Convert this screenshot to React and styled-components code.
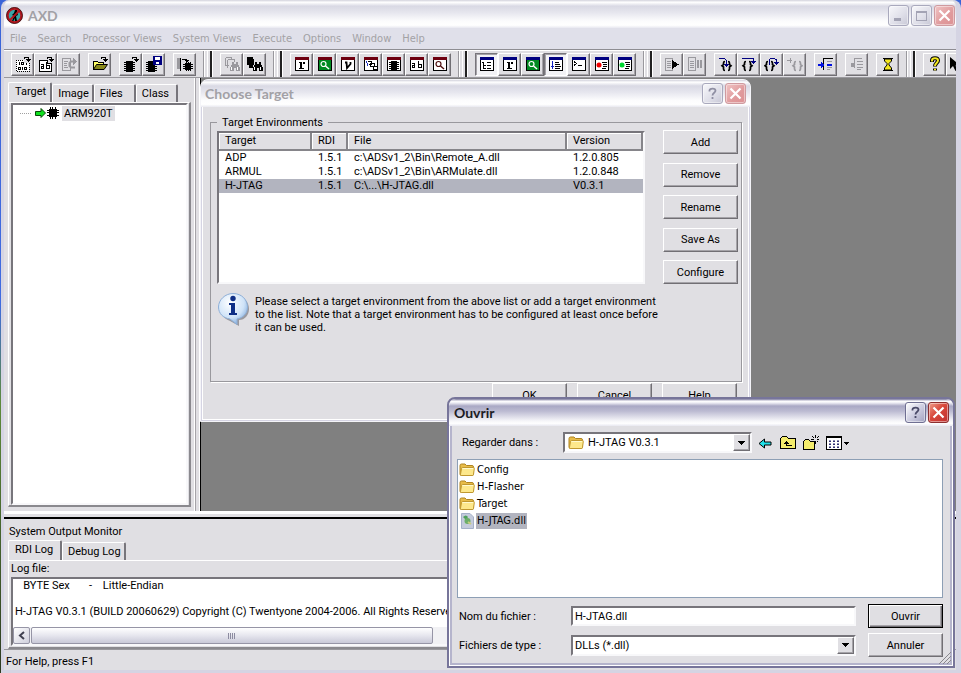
import React from 'react';
import styled, { createGlobalStyle, css } from 'styled-components';

const FACE = '#e0dfe3';
const SANS = 'Roboto, "Liberation Sans", Arial, sans-serif';
const TAHOMA = '"DejaVu Sans Condensed", "Noto Sans", sans-serif';
const TITLE = 'Lato, "Noto Sans", sans-serif';

const GlobalStyle = createGlobalStyle`
  *, *::before, *::after { box-sizing: border-box; }
  body {
    margin: 0;
    background: linear-gradient(#3a64d8 0, #3f6be0 45%, #5d8a3a 60%, #2d3a20 100%);
    font: 11px/13px ${SANS};
    color: #000;
    overflow: hidden;
  }
  button, input, select, textarea { font: inherit; color: inherit; margin: 0; }
  svg { display: block; flex: none; }
`;

const raised = css`
  border: 1px solid;
  border-color: #fff #716f74 #716f74 #fff;
  box-shadow: inset -1px -1px #a5a3a8;
`;
const sunken = css`
  border: 2px solid;
  border-color: #77757b #f8f8fa #f8f8fa #77757b;
`;

/* ---------- main window ---------- */
const Desktop = styled.div`
  position: relative;
  min-height: 100vh;
  padding-left: 1px;
  display: flex;
`;
const AppWindow = styled.main`
  flex: 1;
  min-width: 0;
  display: flex;
  flex-direction: column;
  background: ${FACE};
  border: solid #d5d4e3;
  border-width: 0 5px 3px 3px;
  border-radius: 8px 8px 0 0;
`;
const TitleBar = styled.header`
  display: flex;
  align-items: center;
  gap: 2px;
  height: ${p => p.$h}px;
  flex: none;
  padding: ${p => p.$pad};
  border-radius: 7px 7px 0 0;
  background: ${p => p.$active
    ? 'linear-gradient(#77759a 0, #fff 8%, #eeeef5 14%, #a9a8c4 26%, #bcbbd2 45%, #f4f4f8 80%, #fff 90%, #e8e8f0 100%)'
    : 'linear-gradient(#d2d2dc 0, #fff 8%, #d9d9e4 22%, #e6e6ee 45%, #fcfcfd 75%, #fff 90%, #e8e8f0 100%)'};
`;
const TitleText = styled.h1`
  flex: 1;
  margin: 0;
  font: bold 14px/18px ${TITLE};
  color: ${p => (p.$active ? '#1c1c24' : '#a2a1a6')};
`;
const CaptionButton = styled.button`
  width: 21px;
  height: 21px;
  padding: 0;
  display: grid;
  place-items: center;
  border-radius: 3px;
  border: 1px solid ${p => (p.$close ? (p.$active ? '#8c2f2f' : '#cf9a9f') : (p.$active ? '#6f6f92' : '#a9a9bd'))};
  background: ${p => (p.$close
    ? (p.$active ? 'linear-gradient(135deg, #f0a08c, #d8483c 45%, #c03030)' : 'linear-gradient(135deg, #f0c4c4, #e09a9c 60%, #dd9294)')
    : (p.$active ? 'linear-gradient(135deg, #fff, #cfcfe2 50%, #a2a2c0)' : 'linear-gradient(135deg, #f8f8fb, #dedee8 60%, #c8c8d6)'))};
  box-shadow: inset 0 0 0 1px rgba(255, 255, 255, 0.45);
`;
const MenuBar = styled.nav`
  display: flex;
  gap: 11px;
  height: 21px;
  flex: none;
  padding: 0 6px;
  align-items: center;
  background: #e0e0ea;
`;
const MenuItem = styled.button`
  border: 0;
  padding: 0;
  background: none;
  font: 11px/14px ${TAHOMA};
  color: #a3a2a5;
  white-space: nowrap;
`;

/* ---------- toolbar ---------- */
const Toolbar = styled.div`
  display: flex;
  height: 29px;
  flex: none;
  padding: 1px 0 0 7px;
  align-items: center;
  border-top: 1px solid #8e8d92;
  box-shadow: inset 0 1px #fff;
  border-bottom: 1px solid #99989d;
  overflow: hidden;
`;
const ToolGroup = styled.div`
  display: flex;
  flex: none;
  & + & { margin-left: 8px; }
`;
const ToolButton = styled.button`
  width: 23px;
  height: 23px;
  padding: 0;
  display: grid;
  place-items: center;
  background: ${p => (p.$pressed ? '#f2f2f5' : FACE)};
  ${raised}
  ${p => p.$pressed && css`
    border-color: #77757b #fff #fff #77757b;
    box-shadow: inset 1px 1px #a5a3a8;
  `}
`;
const Divider = styled.div`
  width: 24px;
  align-self: stretch;
  flex: none;
  background: linear-gradient(90deg,
    transparent 7px, #99989d 7px 8px, #fff 8px 9px, transparent 9px 11px, #fff 11px 12px, transparent 12px 14px,
    #222 14px 16px, #fff 16px 17px, transparent 17px);
`;

/* ---------- work area ---------- */
const Work = styled.div`
  display: flex;
  flex: 1;
  min-height: 0;
`;
const SidePane = styled.aside`
  width: 197px;
  flex: none;
  display: flex;
  flex-direction: column;
  padding: 4px 9px 4px 4px;
  border-right: 1px solid #000;
  box-shadow: inset -1px 0 #fff, inset -4px 0 ${FACE}, inset -5px 0 #a5a3a8, inset -6px 0 #fff;
`;
const TabList = styled.div`
  display: flex;
  align-items: flex-end;
  height: 20px;
`;
const Tab = styled.button`
  height: ${p => (p.$on ? 20 : 18)}px;
  padding: ${p => (p.$on ? '0 4px 2px 6px' : '1px 3px 0 5px')};
  min-width: ${p => p.$w || 0}px;
  text-align: left;
  background: ${FACE};
  border: solid;
  border-width: 1px 2px 0 1px;
  border-color: #fff #77757b #fff #fff;
  border-radius: 2px 2px 0 0;
  line-height: 14px;
  white-space: nowrap;
`;
const TabPage = styled.div`
  flex: 1;
  min-height: 0;
  display: flex;
  flex-direction: column;
  padding: ${p => p.$pad};
  border: solid;
  border-width: 1px 2px 2px 1px;
  border-color: #fff #8a898e #8a898e #fff;
`;
const Tree = styled.ul`
  ${sunken}
  flex: 1;
  margin: 0;
  padding: 0 7px;
  list-style: none;
  background: #fff;
`;
const TreeItem = styled.li`
  display: flex;
  align-items: center;
  height: 16px;
`;
const TreeLabel = styled.span`
  margin-left: 3px;
  padding: 1px 2px;
  line-height: 13px;
  background: ${FACE};
`;
const Mdi = styled.section`
  flex: 1;
  background: #808080;
`;
const Splitter = styled.div`
  height: 8px;
  flex: none;
  background: linear-gradient(#fff 3px, ${FACE} 3px 6px, #000 6px 8px);
`;
const Monitor = styled.section`
  flex: none;
  height: 130px;
  display: flex;
  flex-direction: column;
  padding: 5px 5px 0 4px;
`;
const MonitorTitle = styled.h2`
  margin: 0 0 1px 1px;
  font: 11px/15px ${SANS};
`;
const LogLabel = styled.label`
  line-height: 15px;
  margin-bottom: 1px;
`;
const LogBox = styled.div`
  ${sunken}
  flex: 1;
  min-height: 0;
  display: flex;
  flex-direction: column;
  background: #fff;
`;
const LogText = styled.textarea`
  flex: 1;
  min-height: 0;
  border: 0;
  padding: 0 2px;
  resize: none;
  overflow: hidden;
  background: none;
  line-height: 13px;
  white-space: pre;
  outline: none;
`;
const ScrollRow = styled.div`
  display: flex;
  height: 17px;
  flex: none;
  background: #f1f1f4;
`;
const ScrollArrow = styled.button`
  width: 17px;
  padding: 0;
  display: grid;
  place-items: center;
  border: 1px solid #9695a6;
  border-radius: 2px;
  background: linear-gradient(135deg, #fff, #cfcfdc);
`;
const ScrollThumb = styled.div`
  width: 402px;
  margin-left: 1px;
  display: grid;
  place-items: center;
  border: 1px solid #9695a6;
  border-radius: 2px;
  background: linear-gradient(#fff, #e6e6ee 50%, #c9c9d8);
`;
const StatusBar = styled.footer`
  height: 21px;
  flex: none;
  padding: 4px 2px;
  line-height: 15px;
  border-top: 1px solid #99989d;
`;

/* ---------- dialogs ---------- */
const Dialog = styled.section`
  position: absolute;
  left: ${p => p.$x}px;
  top: ${p => p.$y}px;
  width: ${p => p.$w}px;
  display: flex;
  flex-direction: column;
  background: ${FACE};
  border: ${p => (p.$active ? '2px solid #77759a' : '1px solid #f4f4f8')};
  border-radius: 8px 8px 0 0;
  box-shadow: ${p => (p.$active ? 'inset 0 0 0 1px #fff, inset 0 0 0 3px #b5b4cc' : 'inset 0 0 0 1px #d5d4e3, inset 0 0 0 2px #fff')};
`;
const DialogBody = styled.div`
  display: flex;
  flex-direction: column;
  padding: ${p => p.$pad};
`;
const Group = styled.fieldset`
  min-width: 0;
  margin: 0;
  padding: 0 3px 0 6px;
  border: 1px solid #99989d;
  box-shadow: 1px 1px #fff;
  min-height: 267px;
`;
const Legend = styled.legend`
  padding: 0 5px;
  line-height: 15px;
`;
const GroupRow = styled.div`
  display: flex;
  align-items: flex-end;
  gap: 18px;
`;
const ListFrame = styled.div`
  ${sunken}
  flex: 1;
  height: 153px;
  background: #fff;
`;
const Table = styled.table`
  width: 100%;
  border-collapse: separate;
  border-spacing: 0;
  table-layout: fixed;
  line-height: 14px;
`;
const Th = styled.th`
  width: ${p => (p.$w ? `${p.$w}px` : 'auto')};
  height: 18px;
  padding: 0 6px;
  text-align: left;
  font-weight: normal;
  background: ${FACE};
  border: solid;
  border-width: 0 2px 2px 0;
  border-color: #86858a;
  box-shadow: inset 1px 1px #fff;
`;
const Tr = styled.tr`
  background: ${p => (p.$selected ? '#b2b4bf' : 'transparent')};
`;
const Td = styled.td`
  height: 14px;
  padding: 0 5px 0 6px;
  white-space: nowrap;
`;
const ButtonColumn = styled.div`
  width: 75px;
  height: 154px;
  display: flex;
  flex-direction: column;
  justify-content: space-between;
`;
const ButtonRow = styled.div`
  display: flex;
  justify-content: flex-end;
  gap: 10px;
  padding: 1px 5px 0 0;
`;
const PushButton = styled.button`
  width: 75px;
  height: 24px;
  padding: 0;
  background: ${FACE};
  ${raised}
  ${p => p.$default && css`
    border-color: #000;
    box-shadow: inset 1px 1px #fff, inset -1px -1px #716f74, inset -2px -2px #a5a3a8;
  `}
`;
const Info = styled.div`
  display: flex;
  gap: 5px;
  padding: 9px 0 0 1px;
`;
const InfoText = styled.p`
  margin: 2px 0 0;
  white-space: nowrap;
`;
const FieldRow = styled.div`
  display: grid;
  grid-template-columns: 110px 189px 1fr;
  align-items: center;
  min-height: 21px;
`;
const FolderLabel = styled.label`
  padding-left: 9px;
`;
const SelectWrap = styled.div`
  ${sunken}
  position: relative;
  display: flex;
  align-items: center;
  height: 21px;
  padding-left: ${p => (p.$icon ? 3 : 0)}px;
  background: #fff;
`;
const Select = styled.select`
  appearance: none;
  flex: 1;
  min-width: 0;
  height: 17px;
  border: 0;
  padding: 0 18px 0 ${p => (p.$icon ? 4 : 2)}px;
  background: none;
  outline: none;
`;
const DropArrow = styled.span`
  width: 17px;
  height: 17px;
  display: grid;
  place-items: center;
  pointer-events: none;
  background: ${FACE};
  margin-left: -17px;
  ${raised}
`;
const TextInput = styled.input`
  ${sunken}
  width: 100%;
  height: 20px;
  padding: 0 2px;
  background: #fff;
  outline: none;
`;
const NavIcons = styled.div`
  display: flex;
  align-items: center;
  gap: 7px;
  padding-left: 5px;
`;
const IconButton = styled.button`
  border: 0;
  padding: 0;
  background: none;
`;
const FileList = styled.ul`
  margin: 6px 6px 0 4px;
  padding: 1px;
  height: 139px;
  list-style: none;
  background: #fff;
  border: 1px solid #8d9fb5;
`;
const FileItem = styled.li`
  display: flex;
  align-items: center;
  height: 17px;
`;
const FileName = styled.span`
  margin-left: 1px;
  padding: 0 1px;
  font: 11px/16px ${TAHOMA};
  background: ${p => (p.$selected ? '#b2b4bf' : 'none')};
`;
const Form = styled.form`
  display: grid;
  grid-template-columns: 112px 1fr 75px;
  row-gap: 5px;
  align-items: center;
  margin: 6px 6px 0 6px;
`;
const FieldCell = styled.div`
  padding-right: 12px;
`;
const Grip = styled.div`
  position: absolute;
  right: 2px;
  bottom: 2px;
`;

/* ---------- icons ---------- */
const Px = ({ w = 16, h = 16, children, crisp = true }) => (
  <svg width={w} height={h} viewBox={`0 0 ${w} ${h}`} fill="none" shapeRendering={crisp ? 'crispEdges' : 'auto'} aria-hidden="true">
    {children}
  </svg>
);
const G = '#9a999e';
const Hook = ({ c = '#000' }) => <path d="M9.500 2.500V1.500H13.500V4.500M11 3.500H16M12 4.500H15M13 5.500H14" stroke={c} />;
const Frame = ({ head, fill = '#fff', children }) => (
  <Px>
    <rect x="1.500" y="1.500" width="13" height="13" fill={fill} stroke={head} />
    <rect x="1" y="1" width="14" height="3" fill={head} />
    <path d="M14.500 4V14.500H1.500V4" stroke="#000" />
    {children}
  </Px>
);
const Chip = ({ x = 0, y = 0 }) => (
  <g transform={`translate(${x} ${y})`}>
    <rect x="2" y="0" width="7" height="11" fill="#000" />
    <path d="M0 1.500H11M0 3.500H11M0 5.500H11M0 7.500H11M0 9.500H11" stroke="#000" />
  </g>
);
const Bino = ({ x, y, c = '#000' }) => (
  <g transform={`translate(${x} ${y})`}>
    <path d="M2 0H4V2H6V0H8V2L10 6V9H6V6H4V9H0V6L2 2Z" fill={c} />
    <path d="M1.500 5V8M7.500 5V8" stroke="#fff" />
  </g>
);
const Braces = ({ x = 0, c = '#000' }) => (
  <g transform={`translate(${x} 0)`} stroke={c} strokeWidth="1.700" shapeRendering="auto">
    <path d="M5 5.500Q3.500 5.500 3.500 7V8.500L2 9.800L3.500 11V13Q3.500 14.500 5 14.500" />
    <path d="M8 5.500Q9.500 5.500 9.500 7V8.500L11 9.800L9.500 11V13Q9.500 14.500 8 14.500" />
  </g>
);
const Lens = ({ c, x = 0, y = 0 }) => (
  <g transform={`translate(${x} ${y})`} shapeRendering="auto">
    <circle cx="6.500" cy="8" r="2.500" stroke={c} strokeWidth="1.200" />
    <path d="M8.500 10L12 13" stroke={c} strokeWidth="1.500" />
  </g>
);
const SerifR = () => <path d="M5 6H8V7H9V6H11V8H9V7H8V12H10V13H5V12H6V7H5Z" fill="#000" />;
const BreakLines = () => <path d="M8 6.500H13M9 8.500H13M9 10.500H13M8 12.500H12" stroke="#000" />;

const icons = {
  load: (
    <Px>
      <path d="M1 4H9V7H14V15H1Z" fill="#fff" />
      <path d="M1.500 15V4.500H9M14.500 7V15.500H1" stroke="#000" strokeDasharray="1 1" />
      <path d="M4.500 6V9M6.500 6.500H8.500V8.500H6.500ZM11.500 7V9M3.500 11.500H5.500V13.500H3.500ZM7.500 11V14M9.500 11.500H11.500V13.500H9.500Z" stroke="#000" />
      <Hook />
    </Px>
  ),
  text: (
    <Px>
      <path d="M1.500 4.500H9.500V7.500H13.500V15.500H1.500Z" fill="#fff" stroke="#000" />
      <path d="M3 8.500H5.500V12.500H3.500V10.500H5M8.500 6V12.500H11.500V9.500H9" stroke="#000" />
      <Hook />
    </Px>
  ),
  reload: (
    <Px>
      <path d="M1.500 2.500H9.500V14.500H1.500ZM3 5.500H7M3 7.500H6M3 9.500H6M3 11.500H7" stroke={G} />
      <path d="M14 11.500H10L8.500 10V7L10 5.500H13" stroke={G} strokeWidth="2" shapeRendering="auto" />
      <path d="M12 2L16 5.500L12 9Z" fill={G} />
    </Px>
  ),
  open: (
    <Px>
      <path d="M1.500 13.500V5.500H5.500L6.500 6.500H11.500V8.500" fill="#ffff66" stroke="#000" />
      <path d="M1.500 13.500L4.500 8.500H15.500L12 13.500Z" fill="#8a8a1c" stroke="#000" shapeRendering="auto" />
      <Hook />
    </Px>
  ),
  chip: <Px><Chip x={1} y={5} /><Hook /></Px>,
  save: (
    <Px>
      <Chip x={0} y={5} />
      <rect x="7.500" y="0.500" width="8" height="8" fill="#000080" stroke="#000080" />
      <path d="M9 1H14V4H9ZM10 6H13V8H10Z" fill="#fff" />
    </Px>
  ),
  refreshChip: (
    <Px>
      <path d="M0 2H3V13H0Z" fill={G} />
      <path d="M3.500 2V14.500M5 3.500H9.500V6M7.500 4.500H12M8.500 5.500H11" stroke="#000" />
      <g transform="translate(6 6)">
        <rect x="2" y="1" width="6" height="7" fill="#000" />
        <path d="M0 2.500H10M0 4.500H10M0 6.500H10M3.500 0V9M5.500 0V9M7.500 0V9" stroke="#000" />
      </g>
    </Px>
  ),
  findGray: (
    <Px>
      <path d="M1.500 1.500H7.500V4M3.500 3.500H10.500V6M1.500 1.500V9.500H5M3.500 3.500V12" stroke={G} />
      <Bino x={6} y={6} c={G} />
    </Px>
  ),
  find: <Px><path d="M0 1H6V3H7V9H6V12H2V9H0Z" fill="#000" /><Bino x={6} y={6} /></Px>,
  regRed: <Frame head="#6e0010"><SerifR /></Frame>,
  watchRed: <Frame head="#6e0010" fill="#008a20"><Lens c="#fff" /></Frame>,
  varRed: <Frame head="#6e0010"><path d="M5 6.500H6.500L7 12L10.500 8V6" stroke="#000" strokeWidth="1.800" shapeRendering="auto" /></Frame>,
  backtrace: (
    <Frame head="#6e0010">
      <path d="M3.500 5L5 10" stroke="#2030c0" />
      <path d="M4.500 5.500H8.500V8.500H5.500M7.500 7.500H11.500V10.500H7.500ZM10.500 10.500H14.500V13.500H10.500Z" fill="#fff" stroke="#000" />
    </Frame>
  ),
  memory: <Frame head="#6e0010"><path d="M5 5H11V14H5Z" fill="#000" /><path d="M3 6.500H13M3 8.500H13M3 10.500H13M3 12.500H13" stroke="#000" /></Frame>,
  strings: <Frame head="#6e0010"><path d="M3 7.500H5.500V11.500H3.500V9.500H5M9.500 5V11.500H12.500V8.500H10" stroke="#000" /></Frame>,
  searchRed: <Frame head="#6e0010"><Lens c="#501010" /></Frame>,
  tree: <Frame head="#000080"><path d="M3 6.500H5M4.500 6V12.500M5 9.500H7M5 12.500H7M8 6.500H12M8 9.500H12M8 12.500H12" stroke="#000" /></Frame>,
  regBlue: <Frame head="#000080"><SerifR /></Frame>,
  watchBlue: <Frame head="#000080" fill="#008a20"><Lens c="#fff" /></Frame>,
  source: (
    <Frame head="#000080">
      <path d="M4.500 5V13M3 10.500H6" stroke="#1020c0" />
      <path d="M7 6.500H11M7 8.500H12M7 10.500H13M7 12.500H12" stroke="#000" />
    </Frame>
  ),
  console: <Frame head="#000080"><path d="M3 5.500L5.500 7.500L3 9.500M7 9.500H11" stroke="#000" /></Frame>,
  breakRed: <Frame head="#000080"><circle cx="5" cy="9" r="2.500" fill="#f00000" shapeRendering="auto" /><BreakLines /></Frame>,
  breakGreen: <Frame head="#000080"><circle cx="5" cy="9" r="2.500" fill="#00d830" shapeRendering="auto" /><BreakLines /></Frame>,
  run: <Px><path d="M1.500 2.500H8.500V14.500H1.500ZM3 5.500H7M3 7.500H7M3 9.500H7M3 11.500H7" stroke={G} /><path d="M8 4V13L15 8.500Z" fill="#000" /></Px>,
  pause: <Px><path d="M1.500 1.500H8.500V14.500H1.500ZM3 5.500H7M3 7.500H7M3 9.500H7M3 11.500H7" stroke={G} /><path d="M10 4H12V12H10ZM13 4H15V12H13Z" fill={G} /></Px>,
  stepIn: <Px><Braces x={2} /><path d="M1 2.500H6.500L8.500 4.500V10M6 8.500H11M7 9.500H10M8 10.500H9" stroke="#000080" /></Px>,
  stepOver: <Px><Braces /><path d="M1 2.500H12.500V6M10 5.500H15M11 6.500H14M12 7.500H13" stroke="#000080" /></Px>,
  stepOut: <Px><Braces x={-1} /><path d="M5.500 9V3.500L7 2.500H10L12.500 3.500V6M10 6.500H15M11 7.500H14M12 8.500H13" stroke="#000080" /></Px>,
  runTo: <Px><Braces x={4} c={G} /><path d="M0 4.500H5M3.500 2V7" stroke={G} /></Px>,
  cursorIn: (
    <Px>
      <path d="M5.500 14V2.500H15" stroke="#000" />
      <path d="M9 5.500H14M9 11.500H14M9 13.500H12" stroke={G} />
      <path d="M0 9H5M9 9H14" stroke="#0010e0" strokeWidth="2" />
      <path d="M3 6V12L7 9Z" fill="#0010e0" />
    </Px>
  ),
  toggle: <Px><path d="M5.500 12V2.500H13M8 5.500H14M8 8.500H14M8 11.500H14M8 13.500H12" stroke={G} /><circle cx="4" cy="9" r="2.500" fill={G} /></Px>,
  hourglass: (
    <Px>
      <path d="M4.500 3V5L7 7.500V9L4.500 12V14H11.500V12L9 9V7.500L11.500 5V3Z" fill="#f4e820" stroke="#000" shapeRendering="auto" />
      <path d="M3 2.500H13M3 14.500H13" stroke="#000" />
    </Px>
  ),
  help: (
    <Px crisp={false}>
      <path d="M5 6V4.500C5 1.500 11 1.500 11 4.500C11 7 8 7 8 10.500M8 12.500V14.500" stroke="#000" strokeWidth="4" />
      <path d="M5 5.500V4.500C5 1.500 11 1.500 11 4.500C11 7 8 7 8 10M8 12.800V14.200" stroke="#f4e820" strokeWidth="2" />
    </Px>
  ),
  pointer: <Px crisp={false}><path d="M0 1V13L3 10L5.500 15L7.500 14L5.500 9.500H10Z" fill="#000" /></Px>,
};

const Folder = () => (
  <Px crisp={false}>
    <path d="M1 3.500Q1 2 2.500 2H6L7.500 3.500H13Q14.500 3.500 14.500 5V12Q14.500 13.500 13 13.500H2.500Q1 13.500 1 12Z" fill="#e8bc48" stroke="#b08420" />
    <path d="M3.500 5.500H14.500Q15.500 5.500 15.300 6.500L14.500 12.500Q14.300 13.500 13.300 13.500H2.500Q1.300 13.500 1.500 12.300L2.500 6.500Q2.700 5.500 3.500 5.500Z" fill="#fde88c" stroke="#c09830" />
    <path d="M3.500 6.500H14" stroke="#fffad0" />
  </Px>
);
const DllFile = () => (
  <Px crisp={false}>
    <path d="M2.500 0.500H11L14.500 4V15.500H2.500Z" fill="#c4cbdc" stroke="#a4b0c8" />
    <path d="M4 4Q7 1 9 4L7 7Z" fill="#4da05a" />
    <circle cx="8.500" cy="8" r="3" fill="#6cae68" />
    <path d="M9 9L12 11" stroke="#c8cc80" strokeWidth="2" />
  </Px>
);
const AxdLogo = () => (
  <Px w={17} h={17} crisp={false}>
    <circle cx="8.500" cy="8.500" r="7" fill="#3aa6a8" stroke="#b3141c" strokeWidth="2.400" />
    <path d="M6 14L8 9L6 8L8 6L9 3H11L11 5L12 8L10 9L11 14H9L8.500 11L7.500 14Z" fill="#000" />
    <path d="M3.500 13.500L13.500 3.500" stroke="#b3141c" strokeWidth="1.800" />
    <circle cx="8.500" cy="8.500" r="8" stroke="#301010" strokeWidth="0.800" />
  </Px>
);
const CloseX = () => (
  <Px w={13} h={13} crisp={false}><path d="M1.500 1.500L11.500 11.500M11.500 1.500L1.500 11.500" stroke="#fff" strokeWidth="2.200" /></Px>
);
const QuestionMark = ({ c }) => (
  <Px w={13} h={13} crisp={false}><path d="M3.500 4.500V3.500C3.500 1 9.500 1 9.500 3.800C9.500 5.800 6.500 5.800 6.500 8.500M6.500 10V12" stroke={c} strokeWidth="1.800" /></Px>
);
const InfoBubble = () => (
  <Px w={32} h={34} crisp={false}>
    <defs>
      <radialGradient id="bubble" cx="0.400" cy="0.300" r="0.800">
        <stop offset="0" stopColor="#fff" />
        <stop offset="0.600" stopColor="#cfe3f8" />
        <stop offset="1" stopColor="#6f9ed6" />
      </radialGradient>
    </defs>
    <path d="M17 3C26 3 31 9 31 16C31 22 27 27 21 27V33L12 28C6 26 3 21 3 16C3 9 9 3 17 3Z" fill="#6a6a72" opacity="0.600" />
    <path d="M15 0.500C24 0.500 29.500 7 29.500 14C29.500 20.500 25 25 19 26V31.500L12 26C5 25 0.500 20.500 0.500 14C0.500 7 7 0.500 15 0.500Z" fill="url(#bubble)" stroke="#8fb0d8" />
    <circle cx="15" cy="5.500" r="2.700" fill="#0f2f86" />
    <path d="M11 10H17V20H19V22H11V20H13V12H11Z" fill="#0f2f86" />
  </Px>
);
const Down = () => <Px w={7} h={4}><path d="M0 0H7L3.500 4Z" fill="#000" /></Px>;

/* ---------- data ---------- */
const menus = ['File', 'Search', 'Processor Views', 'System Views', 'Execute', 'Options', 'Window', 'Help'];
const toolbars = [
  [['load', 'text', 'reload'], ['open'], ['chip', 'save'], ['refreshChip']],
  [['findGray', 'find']],
  [['regRed', 'watchRed', 'varRed', 'backtrace', 'memory', 'strings', 'searchRed']],
  [['tree', 'regBlue', 'watchBlue', 'source', 'console', 'breakRed', 'breakGreen']],
  [['run', 'pause'], ['stepIn', 'stepOver', 'stepOut', 'runTo'], ['cursorIn'], ['toggle'], ['hourglass']],
  [['help', 'pointer']],
];
const pressed = ['tree', 'source'];
const targets = [
  ['ADP', '1.5.1', 'c:\\ADSv1_2\\Bin\\Remote_A.dll', '1.2.0.805'],
  ['ARMUL', '1.5.1', 'c:\\ADSv1_2\\Bin\\ARMulate.dll', '1.2.0.848'],
  ['H-JTAG', '1.5.1', 'C:\\...\\H-JTAG.dll', 'V0.3.1'],
];
const log = '   BYTE Sex       -    Little-Endian\n\nH-JTAG V0.3.1 (BUILD 20060629) Copyright (C) Twentyone 2004-2006. All Rights Reserved.';

const ChooseTarget = () => (
  <Dialog $x={200} $y={79} $w={551} aria-label="Choose Target">
    <TitleBar $h={27} $pad="0 4px">
      <TitleText>Choose Target</TitleText>
      <CaptionButton aria-label="Help"><QuestionMark c="#8f8fa3" /></CaptionButton>
      <CaptionButton $close aria-label="Close"><CloseX /></CaptionButton>
    </TitleBar>
    <DialogBody $pad="8px 8px 14px 9px">
      <Group>
        <Legend>Target Environments</Legend>
        <GroupRow>
          <ListFrame>
            <Table>
              <thead>
                <tr><Th $w={93}>Target</Th><Th $w={36}>RDI</Th><Th>File</Th><Th $w={76}>Version</Th></tr>
              </thead>
              <tbody>
                {targets.map(row => (
                  <Tr key={row[0]} $selected={row[0] === 'H-JTAG'}>
                    {row.map(cell => <Td key={cell}>{cell}</Td>)}
                  </Tr>
                ))}
              </tbody>
            </Table>
          </ListFrame>
          <ButtonColumn>
            {['Add', 'Remove', 'Rename', 'Save As', 'Configure'].map(b => <PushButton key={b}>{b}</PushButton>)}
          </ButtonColumn>
        </GroupRow>
        <Info>
          <InfoBubble />
          <InfoText>
            Please select a target environment from the above list or add a target environment<br />
            to the list. Note that a target environment has to be configured at least once before<br />
            it can be used.
          </InfoText>
        </Info>
      </Group>
      <ButtonRow>
        {['OK', 'Cancel', 'Help'].map(b => <PushButton key={b}>{b}</PushButton>)}
      </ButtonRow>
    </DialogBody>
  </Dialog>
);

const OpenDialog = () => (
  <Dialog $active $x={447} $y={397} $w={508} aria-label="Ouvrir">
    <TitleBar $active $h={27} $pad="0 4px 0 5px">
      <TitleText $active>Ouvrir</TitleText>
      <CaptionButton $active aria-label="Help"><QuestionMark c="#4a4a68" /></CaptionButton>
      <CaptionButton $active $close aria-label="Close"><CloseX /></CaptionButton>
    </TitleBar>
    <DialogBody $pad="6px 4px 9px 4px">
      <FieldRow>
        <FolderLabel htmlFor="folder">Regarder dans :</FolderLabel>
        <SelectWrap $icon>
          <Folder />
          <Select $icon id="folder"><option>H-JTAG V0.3.1</option></Select>
          <DropArrow><Down /></DropArrow>
        </SelectWrap>
        <NavIcons>
          <IconButton aria-label="Back">
            <Px><path d="M2 8.500L7.500 4V7H14V10H7.500V13Z" fill="#20e0e8" stroke="#000" shapeRendering="auto" /></Px>
          </IconButton>
          <IconButton aria-label="Up one level">
            <Px><path d="M0.500 13.500V3.500L2.500 1.500H6.500L8.500 3.500H15.500V13.500Z" fill="#f4ec6c" stroke="#000" /><path d="M6.500 6V10.500H12M4 8.500H9M5 7.500H8M6 6.500H7" stroke="#000" /></Px>
          </IconButton>
          <IconButton aria-label="New folder">
            <Px><path d="M0.500 14.500V6.500L2.500 4.500H5.500L7.500 6.500H11.500V14.500Z" fill="#f4ec6c" stroke="#000" /><path d="M12.500 0V3M12.500 6V9M8 4.500H11M14 4.500H16M9.500 1.500L11 3M15.500 1.500L14 3M15.500 7.500L14 6" stroke="#000" /></Px>
          </IconButton>
          <IconButton aria-label="View">
            <Px w={24}>
              <path d="M0.500 1.500H15.500V14.500H0.500Z" fill="#fff" stroke="#000" />
              <path d="M1 2.500H15" stroke="#000" />
              <path d="M3 6.500H13M3 9.500H13M3 12.500H13" stroke="#303070" strokeDasharray="2 2" />
              <path d="M3 5.500H13M3 8.500H13M3 11.500H13" stroke="#9090b8" strokeDasharray="2 2" />
              <path d="M18 7H23L20.500 10Z" fill="#000" />
            </Px>
          </IconButton>
        </NavIcons>
      </FieldRow>
      <FileList>
        {['Config', 'H-Flasher', 'Target'].map(n => (
          <FileItem key={n}><Folder /><FileName>{n}</FileName></FileItem>
        ))}
        <FileItem><DllFile /><FileName $selected>H-JTAG.dll</FileName></FileItem>
      </FileList>
      <Form onSubmit={e => e.preventDefault()}>
        <label htmlFor="name">Nom du fichier :</label>
        <FieldCell><TextInput id="name" defaultValue="H-JTAG.dll" /></FieldCell>
        <PushButton $default type="submit">Ouvrir</PushButton>
        <label htmlFor="type">Fichiers de type :</label>
        <FieldCell>
          <SelectWrap>
            <Select id="type"><option>DLLs (*.dll)</option></Select>
            <DropArrow><Down /></DropArrow>
          </SelectWrap>
        </FieldCell>
        <PushButton type="button">Annuler</PushButton>
      </Form>
    </DialogBody>
    <Grip>
      <Px w={12} h={12}><path d="M0 12L12 0M4 12L12 4M8 12L12 8" stroke="#88878c" shapeRendering="auto" /></Px>
    </Grip>
  </Dialog>
);

export default function App() {
  return (
    <Desktop>
      <GlobalStyle />
      <AppWindow>
        <TitleBar $h={28} $pad="3px 1px 0 2px">
          <AxdLogo />
          <TitleText>&nbsp;AXD</TitleText>
          <CaptionButton aria-label="Minimize"><Px w={13} h={13}><path d="M2 9H9V12H2Z" fill="#a3a3b4" /></Px></CaptionButton>
          <CaptionButton aria-label="Maximize"><Px w={13} h={13}><path d="M1.500 2.500H11.500V11.500H1.500ZM1 3.500H12" stroke="#a3a3b4" /></Px></CaptionButton>
          <CaptionButton $close aria-label="Close"><CloseX /></CaptionButton>
        </TitleBar>
        <MenuBar>{menus.map(m => <MenuItem key={m}>{m}</MenuItem>)}</MenuBar>
        <Toolbar>
          {toolbars.map((bar, i) => (
            <React.Fragment key={i}>
              {i > 0 && <Divider />}
              {bar.map(group => (
                <ToolGroup key={group[0]}>
                  {group.map(n => (
                    <ToolButton key={n} $pressed={pressed.includes(n)} aria-label={n}>{icons[n]}</ToolButton>
                  ))}
                </ToolGroup>
              ))}
            </React.Fragment>
          ))}
        </Toolbar>
        <Work>
          <SidePane>
            <TabList role="tablist">
              <Tab role="tab" $on $w={44}>Target</Tab>
              <Tab role="tab" $w={41}>Image</Tab>
              <Tab role="tab" $w={42}>Files</Tab>
              <Tab role="tab" $w={42}>Class</Tab>
            </TabList>
            <TabPage $pad="0 1px 0 2px">
              <Tree>
                <TreeItem>
                  <Px w={15}><path d="M0 8.500H12" stroke="#a0a0a0" strokeDasharray="1 1" /></Px>
                  <Px w={11} h={12}><path d="M0.500 4.500H6V1.500L10.500 6L6 10.500V8.500H0.500Z" fill="#10e020" stroke="#084808" shapeRendering="auto" /></Px>
                  <Px w={13} h={12}>
                    <rect x="3" y="2" width="8" height="8" fill="#000" />
                    <path d="M1 3.500H13M1 5.500H13M1 8.500H13M4.500 0V12M6.500 0V12M9.500 0V12" stroke="#000" />
                  </Px>
                  <TreeLabel>ARM920T</TreeLabel>
                </TreeItem>
              </Tree>
            </TabPage>
          </SidePane>
          <Mdi />
        </Work>
        <Splitter />
        <Monitor>
          <MonitorTitle>System Output Monitor</MonitorTitle>
          <TabList role="tablist">
            <Tab role="tab" $on $w={54}>RDI Log</Tab>
            <Tab role="tab" $w={64}>Debug Log</Tab>
          </TabList>
          <TabPage $pad="0 1px 1px 2px">
            <LogLabel htmlFor="log">Log file:</LogLabel>
            <LogBox>
              <LogText id="log" readOnly wrap="off" value={log} />
              <ScrollRow>
                <ScrollArrow aria-label="Scroll left"><Px w={7} h={9} crisp={false}><path d="M6 1L2 4.500L6 8" stroke="#404050" strokeWidth="2" /></Px></ScrollArrow>
                <ScrollThumb><Px w={8} h={6}><path d="M0.500 0V6M2.500 0V6M4.500 0V6M6.500 0V6" stroke="#8c8ba0" /></Px></ScrollThumb>
              </ScrollRow>
            </LogBox>
          </TabPage>
        </Monitor>
        <StatusBar>For Help, press F1</StatusBar>
      </AppWindow>
      <ChooseTarget />
      <OpenDialog />
    </Desktop>
  );
}
